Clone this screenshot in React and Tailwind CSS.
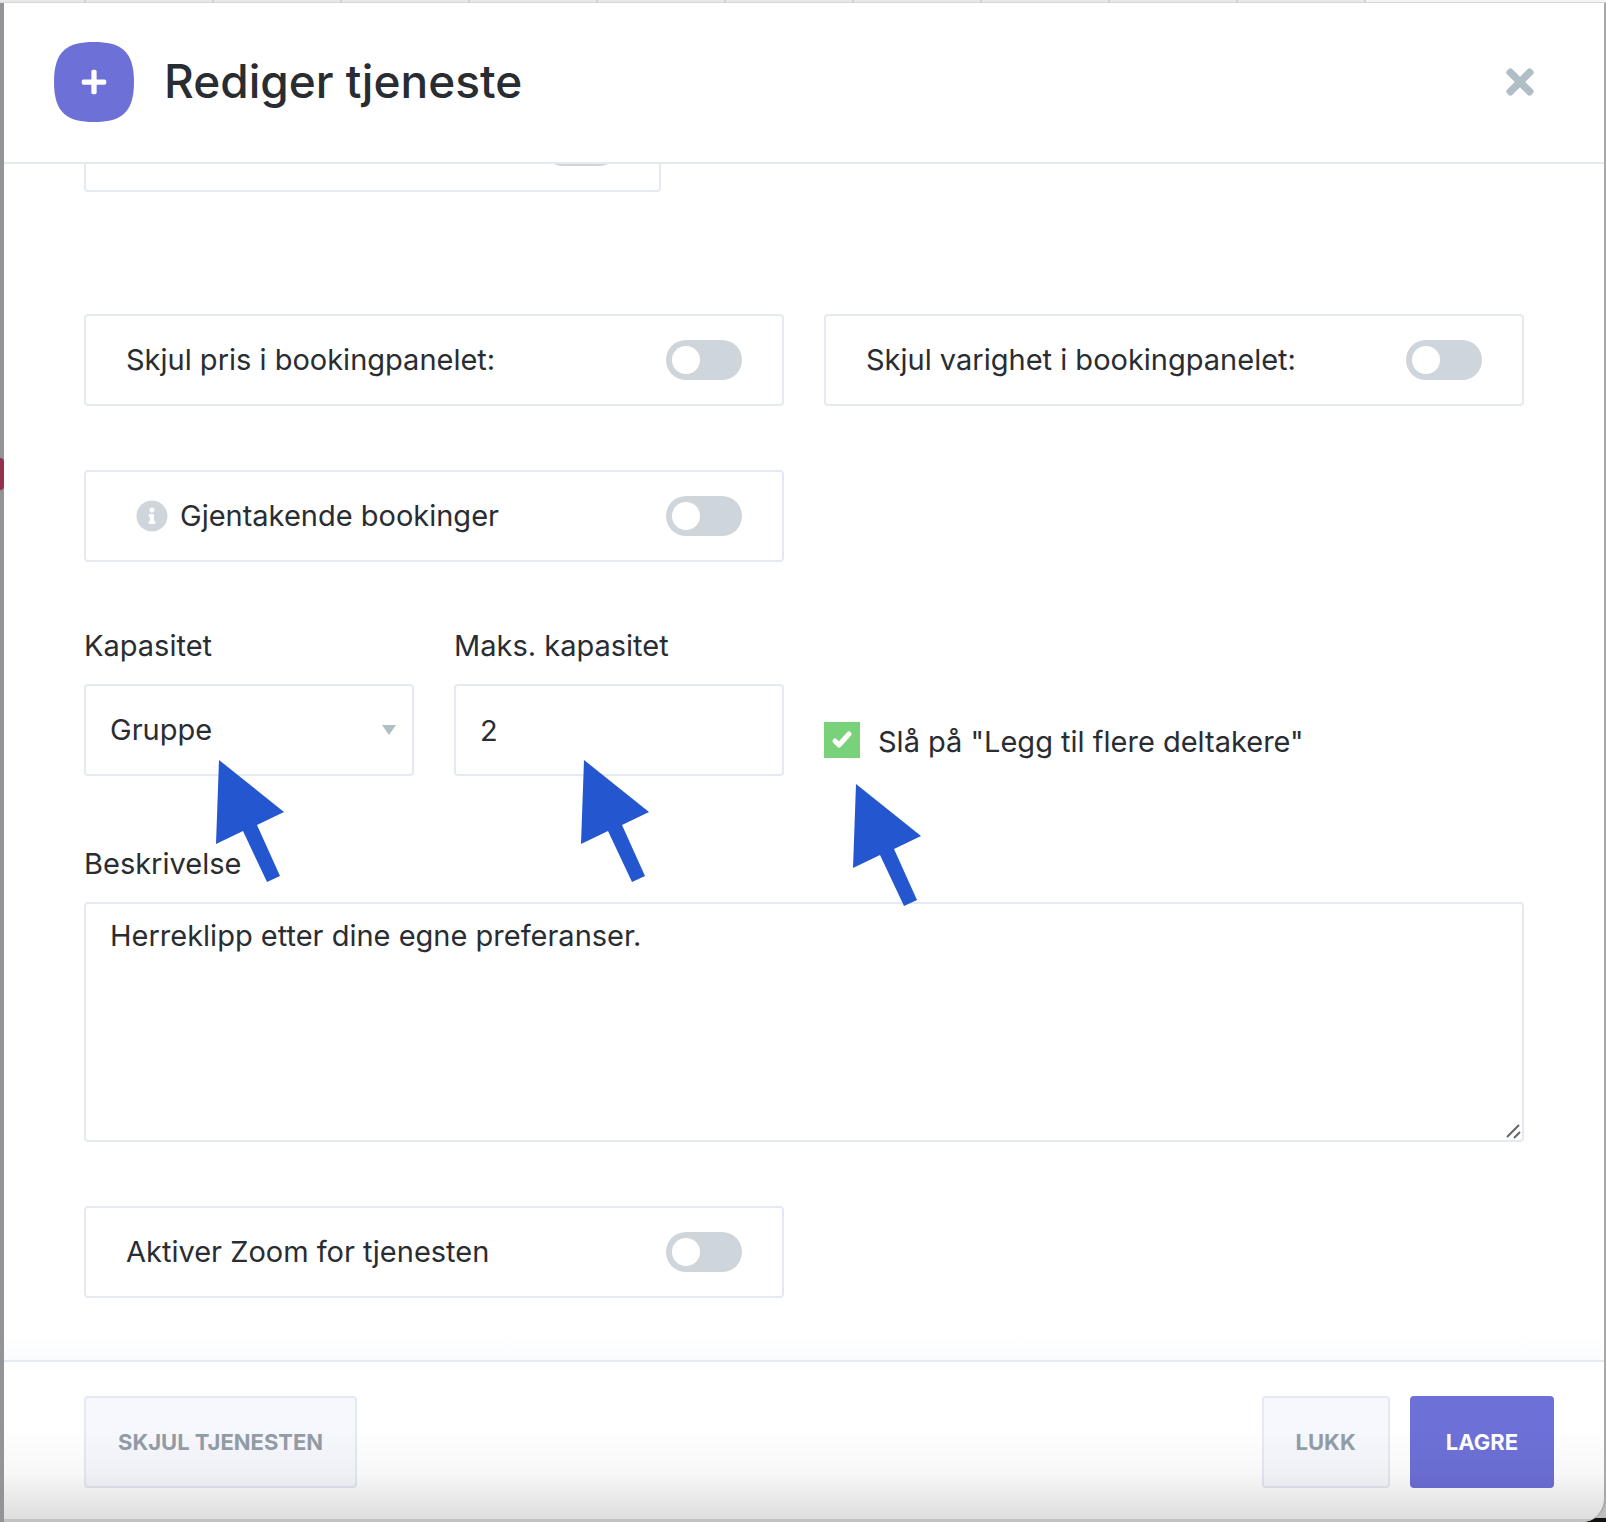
import { FaInfoCircle, FaPlus, FaTimes } from 'react-icons/fa'

const tabs = Array.from({ length: 11 })

function Toggle({ id }) {
    return (
        <input id={id} type="checkbox" role="switch"
            className="relative h-10 w-[76px] shrink-0 cursor-pointer appearance-none rounded-full bg-[#ced6dc] before:absolute before:left-1.5 before:top-1.5 before:size-7 before:rounded-full before:bg-white checked:bg-[#6d70d6] checked:before:left-[42px]" />
    )
}

function ToggleCard({ id, label, info, className = 'w-full' }) {
    return (
        <div className={`flex h-[92px] items-center justify-between rounded-sm border-2 border-[#e4e9f2] px-10 ${className}`}>
            <label htmlFor={id} className="flex items-center gap-3">
                {info && <FaInfoCircle className="ml-2.5 size-8 shrink-0 text-[#ced6dc]" />}
                {label}
            </label>
            <Toggle id={id} />
        </div>
    )
}

function Arrow({ className }) {
    return (
        <svg viewBox="0 0 68 122" className={`pointer-events-none absolute z-10 h-[122px] w-[68px] ${className}`} fill="#2456cf">
            <path d="M3 0 68 52 41 65 64 116 51 122 27 71 0 84Z" />
        </svg>
    )
}

const field = 'w-full rounded-sm border-2 border-[#e4e9f2] bg-white px-6 outline-none focus:border-[#6d70d6]'
const grayButton = 'h-[92px] rounded-sm border-2 border-[#e4e9f2] bg-[#f7f8fd] px-8 text-[#929da6]'

export default function App() {
    return (
        <div className="relative flex min-h-screen flex-col bg-[#949398] pl-1 font-['Inter',sans-serif] text-[29px] leading-10 text-[#292d32]">
            <div className="-ml-1 flex h-[3px] border-b border-[#d6d6d6] bg-[#f4f4f4]">
                {tabs.map((_, i) => (
                    <div key={i} className="w-32 border-r-2 border-[#d2d2d2] bg-[#e8e8e8] first:w-[86px]" />
                ))}
            </div>
            <div className="absolute left-0 top-[458px] h-8 w-1 rounded-r-sm bg-[#94304c]" />
            {/* desktop behind the rounded window corner */}
            <div className="absolute bottom-0 right-0 h-7 w-7 border-b-4 border-[#12120c] bg-[#bdbdbd]" />

            <div className="relative flex grow flex-col overflow-hidden rounded-br-3xl border-r-2 border-[#a8a8a8] bg-white">
                <header className="flex h-[161px] shrink-0 items-center border-b-2 border-[#e4e9f2] pb-0.5 pl-[50px] pr-16">
                    <div className="relative flex size-20 items-center justify-center">
                        <svg viewBox="0 0 80 80" className="absolute inset-0 size-20" fill="#6d70d6">
                            <path d="M40 0C66 0 80 8 80 40S66 80 40 80 0 72 0 40 14 0 40 0Z" />
                        </svg>
                        <FaPlus className="relative size-7 text-white" />
                    </div>
                    <h1 className="ml-[30px] grow pb-0.5 text-[46px] font-medium leading-[56px]">Rediger tjeneste</h1>
                    <button type="button" aria-label="Lukk" className="text-[#b0bec5]">
                        <FaTimes className="size-10" />
                    </button>
                </header>

                <main className="overflow-hidden bg-linear-to-t from-[#f9fbfd] to-white to-[24px] px-20">
                    <ToggleCard id="betaling" label="Betaling ved booking:" className="-mt-16 w-[577px]" />

                    <div className="mt-[122px] grid grid-cols-2 gap-x-10 gap-y-16">
                        <ToggleCard id="pris" label="Skjul pris i bookingpanelet:" />
                        <ToggleCard id="varighet" label="Skjul varighet i bookingpanelet:" />
                        <ToggleCard id="gjentakende" label="Gjentakende bookinger" info />
                    </div>

                    <div className="mt-16 grid grid-cols-4 gap-x-10">
                        <div className="relative">
                            <label htmlFor="kapasitet" className="mb-[18px] block">Kapasitet</label>
                            <div className="relative">
                                <select id="kapasitet" defaultValue="gruppe" className={`${field} h-[92px] appearance-none`}>
                                    <option value="enkel">Enkel</option>
                                    <option value="gruppe">Gruppe</option>
                                </select>
                                <svg viewBox="0 0 14 10" className="pointer-events-none absolute right-[18px] top-[41px] h-2.5 w-3.5" fill="#b0bec5">
                                    <path d="M0 0H14L7 10Z" />
                                </svg>
                            </div>
                            <Arrow className="left-[132px] top-[134px]" />
                        </div>
                        <div className="relative">
                            <label htmlFor="maks" className="mb-[18px] block">Maks. kapasitet</label>
                            <input id="maks" type="text" defaultValue="2" className={`${field} h-[92px]`} />
                            <Arrow className="left-[127px] top-[134px]" />
                        </div>
                        <div className="relative col-span-2 flex items-center self-end pb-3.5">
                            <span className="relative size-9 shrink-0">
                                <input id="deltakere" type="checkbox" defaultChecked className="peer block size-9 appearance-none border-2 border-[#e4e9f2] checked:border-0 checked:bg-[#79d279]" />
                                <svg viewBox="0 0 36 36" className="pointer-events-none absolute inset-0 hidden size-9 peer-checked:block" fill="none" stroke="#fff" strokeWidth="5" strokeLinecap="round" strokeLinejoin="round">
                                    <path d="M11 19 15 23 25 12" />
                                </svg>
                            </span>
                            <label htmlFor="deltakere" className="ml-[18px] pt-1">Slå på "Legg til flere deltakere"</label>
                            <Arrow className="left-[29px] top-[66px]" />
                        </div>
                    </div>

                    <label htmlFor="beskrivelse" className="mb-[18px] mt-[68px] block">Beskrivelse</label>
                    <div className="relative">
                        <textarea id="beskrivelse" defaultValue="Herreklipp etter dine egne preferanser." className={`${field} block h-60 resize-none py-3`} />
                        <svg viewBox="0 0 16 16" className="pointer-events-none absolute bottom-0.5 right-0.5 size-4" stroke="#666" strokeWidth="2">
                            <path d="M1 13 13 1M8 14 14 8" />
                        </svg>
                    </div>

                    <div className="mb-[62px] mt-16 grid grid-cols-2 gap-x-10">
                        <ToggleCard id="zoom" label="Aktiver Zoom for tjenesten" />
                    </div>
                </main>

                <footer className="flex grow items-start gap-5 border-t-2 border-[#e4e9f2] pl-20 pr-[50px] pt-[34px] text-[22px] font-bold">
                    <button type="button" className={grayButton}>SKJUL TJENESTEN</button>
                    <button type="button" className={`${grayButton} ml-auto`}>LUKK</button>
                    <button type="button" className="h-[92px] rounded-sm bg-[#6d70d6] px-9 text-white">LAGRE</button>
                </footer>
                <div className="pointer-events-none absolute inset-x-0 bottom-0 h-24 border-b-[3px] border-[#c2c2c2] bg-linear-to-b from-black/0 via-black/3 to-black/13" />
            </div>
        </div>
    )
}
